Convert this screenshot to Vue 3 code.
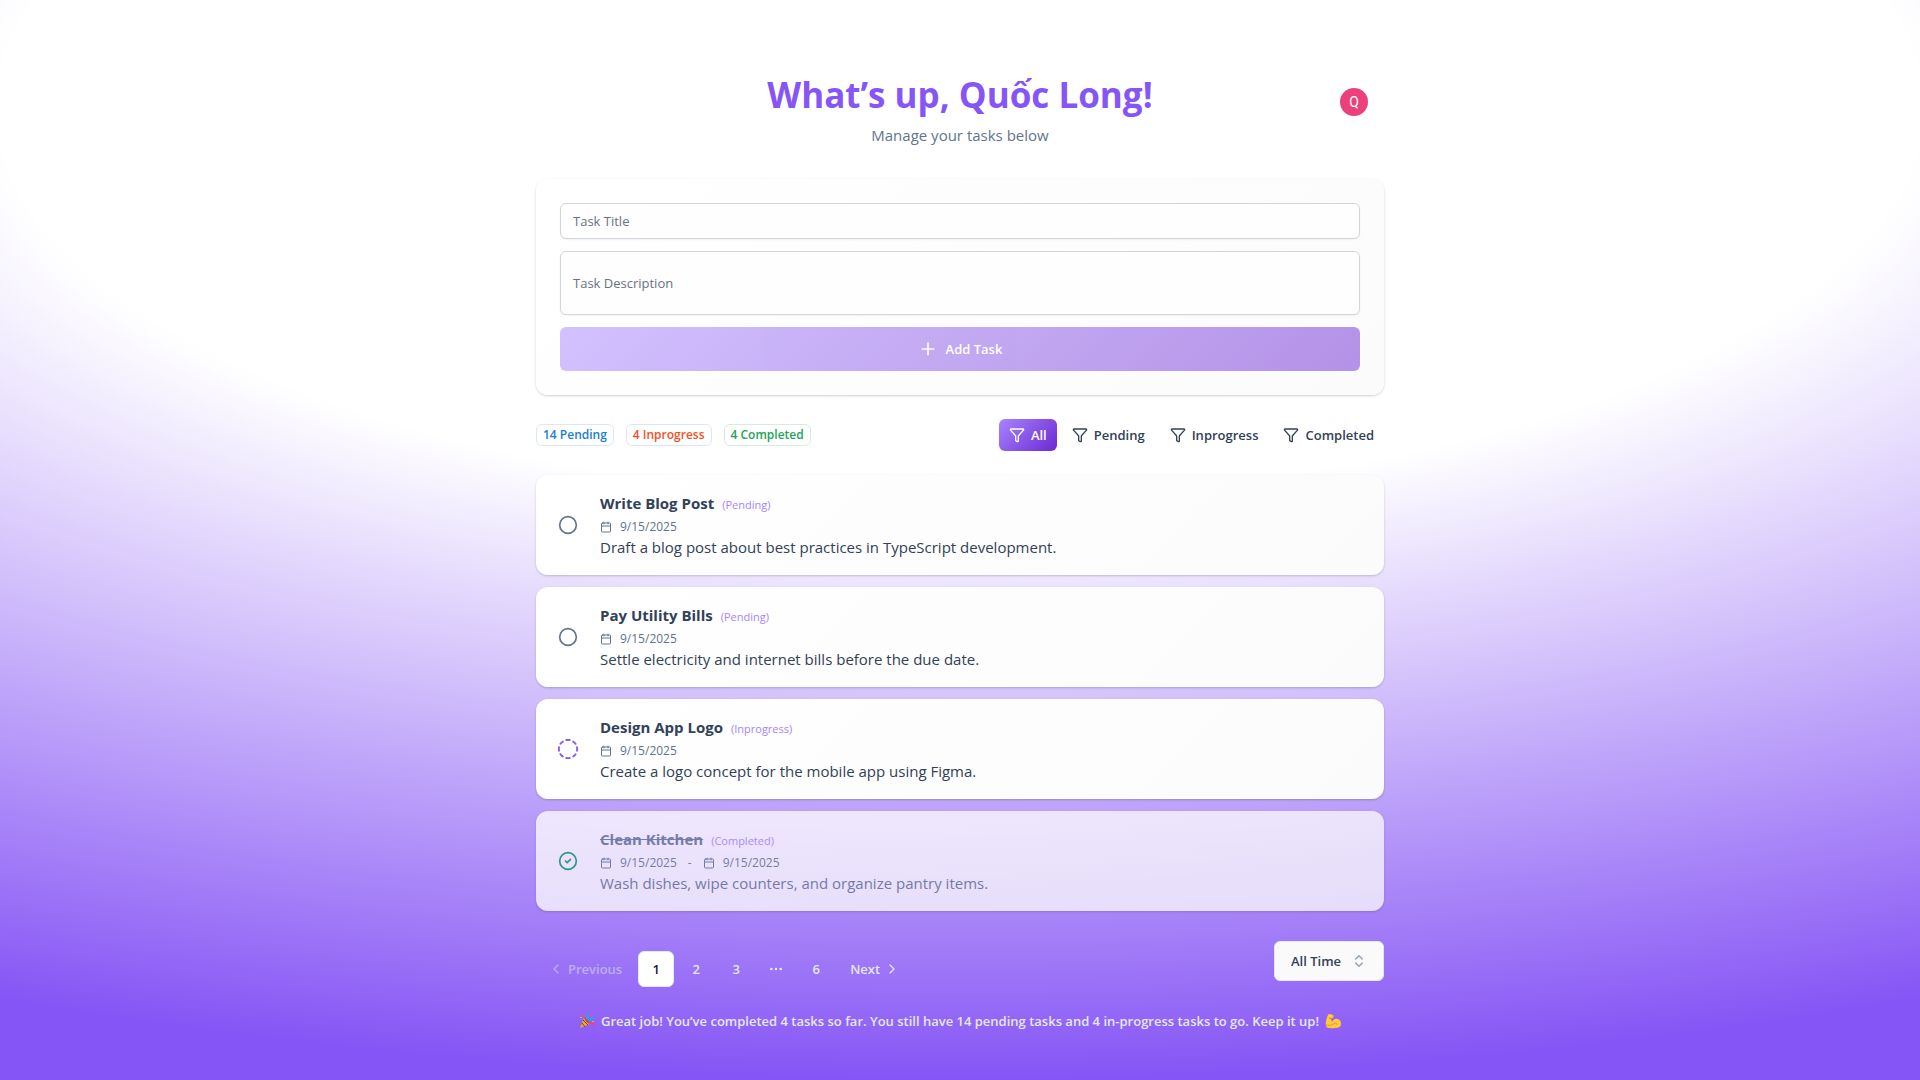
<script setup>
import { ref } from 'vue'

const title = ref('')
const description = ref('')
const activeFilter = ref('All')
const range = ref('All Time')
const filters = ['All', 'Pending', 'Inprogress', 'Completed']
const stats = [
  { text: '14 Pending', tone: 'blue' },
  { text: '4 Inprogress', tone: 'orange' },
  { text: '4 Completed', tone: 'green' },
]
const tasks = [
  { title: 'Write Blog Post', status: 'Pending', dates: ['9/15/2025'], text: 'Draft a blog post about best practices in TypeScript development.' },
  { title: 'Pay Utility Bills', status: 'Pending', dates: ['9/15/2025'], text: 'Settle electricity and internet bills before the due date.' },
  { title: 'Design App Logo', status: 'Inprogress', dates: ['9/15/2025'], text: 'Create a logo concept for the mobile app using Figma.' },
  { title: 'Clean Kitchen', status: 'Completed', dates: ['9/15/2025', '9/15/2025'], text: 'Wash dishes, wipe counters, and organize pantry items.' },
]
</script>

<template>
  <div class="page">
    <main class="column">
      <header class="header">
        <h1>What’s up, Quốc Long!</h1>
        <p>Manage your tasks below</p>
        <button class="avatar" type="button" aria-label="Account">Q</button>
      </header>

      <form class="card composer" @submit.prevent>
        <input v-model="title" class="field" type="text" placeholder="Task Title" aria-label="Task Title" />
        <input v-model="description" class="field tall" type="text" placeholder="Task Description" aria-label="Task Description" />
        <button class="add" type="submit">
          <svg class="icon plus" viewBox="0 0 24 24"><path d="M5 12h14M12 5v14" /></svg>
          Add Task
        </button>
      </form>

      <section class="toolbar">
        <div class="stats">
          <span v-for="s in stats" :key="s.text" class="stat" :class="s.tone">{{ s.text }}</span>
        </div>
        <div class="filters">
          <button
            v-for="f in filters"
            :key="f"
            type="button"
            class="filter"
            :class="{ active: f === activeFilter }"
            @click="activeFilter = f"
          >
            <svg class="icon funnel" viewBox="0 0 24 24"><path d="M10 20a1 1 0 0 0 .553.895l2 1A1 1 0 0 0 14 21v-7a2 2 0 0 1 .517-1.341L21.74 4.67A1 1 0 0 0 21 3H3a1 1 0 0 0-.742 1.67l7.225 7.989A2 2 0 0 1 10 14z" /></svg>
            {{ f }}
          </button>
        </div>
      </section>

      <section class="tasks">
        <article v-for="t in tasks" :key="t.title" class="card task" :class="t.status.toLowerCase()">
          <button class="state" type="button" :aria-label="t.status">
            <svg v-if="t.status === 'Pending'" class="icon" viewBox="0 0 24 24"><circle cx="12" cy="12" r="10" /></svg>
            <svg v-else-if="t.status === 'Inprogress'" class="icon" viewBox="0 0 24 24">
              <path d="M10.1 2.182a10 10 0 0 1 3.8 0M13.9 21.818a10 10 0 0 1-3.8 0M17.609 3.721a10 10 0 0 1 2.69 2.7M2.182 13.9a10 10 0 0 1 0-3.8M20.279 17.609a10 10 0 0 1-2.7 2.69M21.818 10.1a10 10 0 0 1 0 3.8M3.721 6.391a10 10 0 0 1 2.7-2.69M6.391 20.279a10 10 0 0 1-2.69-2.7" />
            </svg>
            <svg v-else class="icon" viewBox="0 0 24 24"><circle cx="12" cy="12" r="10" /><path d="m9 12 2 2 4-4" /></svg>
          </button>
          <div class="body">
            <div class="heading">
              <h2>{{ t.title }}</h2>
              <span>({{ t.status }})</span>
            </div>
            <div class="dates">
              <template v-for="(d, i) in t.dates" :key="i">
                <span v-if="i > 0" class="dash">-</span>
                <svg class="icon calendar" viewBox="0 0 24 24"><path d="M8 2v4M16 2v4M3 10h18" /><rect x="3" y="4" width="18" height="18" rx="2" /></svg>
                <time>{{ d }}</time>
              </template>
            </div>
            <p>{{ t.text }}</p>
          </div>
        </article>
      </section>

      <section class="bottom">
        <nav class="pager" aria-label="Pagination">
          <a class="step disabled" href="#"><svg class="icon" viewBox="0 0 24 24"><path d="m15 18-6-6 6-6" /></svg>Previous</a>
          <a class="num current" href="#" aria-current="page">1</a>
          <a class="num" href="#">2</a>
          <a class="num" href="#">3</a>
          <span class="num"><svg class="icon dots" viewBox="0 0 24 24"><circle cx="5" cy="12" r="1" /><circle cx="12" cy="12" r="1" /><circle cx="19" cy="12" r="1" /></svg></span>
          <a class="num" href="#">6</a>
          <a class="step" href="#">Next<svg class="icon" viewBox="0 0 24 24"><path d="m9 18 6-6-6-6" /></svg></a>
        </nav>
        <label class="range">
          <select v-model="range" aria-label="Time range">
            <option>All Time</option>
            <option>Today</option>
          </select>
          <svg class="icon" viewBox="0 0 24 24"><path d="m7 15 5 5 5-5M7 9l5-5 5 5" /></svg>
        </label>
      </section>

      <footer class="summary">
        <svg class="emoji" viewBox="0 0 16 16" aria-hidden="true">
          <path d="M1 15 5 5l6 6z" fill="#f5a623" />
          <path d="m3 10 3 4M4 7l5 5" stroke="#6b4a35" stroke-width="1" />
          <path d="M5 5q4 1 6 6-4-1-6-6" fill="#b5532b" />
          <path d="M8 6q2-2 0-5M10 8q1-4 5-3" stroke="#1fa7f0" stroke-width="2" fill="none" />
          <path d="M10 10q3-1 5 2" stroke="#e5458f" stroke-width="2" fill="none" />
          <path d="M4 1h2v2H4zM11 1h2v2h-2z" fill="#ee4b92" />
          <path d="M1 4h2v1H1zM13 8h2v1h-2z" fill="#f5a623" />
        </svg>
        <p>Great job! You’ve completed 4 tasks so far. You still have 14 pending tasks and 4 in-progress tasks to go. Keep it up!</p>
        <svg class="emoji" viewBox="0 0 16 16" aria-hidden="true">
          <path d="M3 2q0-1 2-1l3 1q1 1 0 3l-2 1 1 3q2-4 6-3 3 1 3 5 0 4-6 4-8 1-9-2Q0 8 3 2" fill="#ffc83d" />
          <path d="M1 12q5 2 9-2 2 0 2 2" stroke="#f19a22" stroke-width="1" fill="none" />
          <path d="M4 5q2 1 4 0" stroke="#e08a1a" stroke-width="1" fill="none" />
        </svg>
      </footer>
    </main>
  </div>
</template>

<style>
body {
  margin: 0;
}
</style>

<style scoped>
.page {
  box-sizing: border-box;
  min-height: 100vh;
  padding: 32px 16px;
  background: radial-gradient(125% 90% at 50% 10%, #fff 40%, #8655f5 100%);
  color: #314158;
  font-family: "Segoe UI", "Open Sans", "Noto Sans", sans-serif;
  font-size: 15px;
  line-height: 24px;
}

.page *,
.page *::before {
  box-sizing: border-box;
}

h1,
h2,
p {
  margin: 0;
}

button,
input,
select {
  font: inherit;
  color: inherit;
}

button {
  border: 0;
  padding: 0;
  background: none;
  cursor: pointer;
}

a {
  color: inherit;
  text-decoration: none;
}

.icon {
  flex: none;
  width: 16px;
  height: 16px;
  fill: none;
  stroke: currentColor;
  stroke-width: 2;
  stroke-linecap: round;
  stroke-linejoin: round;
}

.column {
  display: flex;
  flex-direction: column;
  gap: 24px;
  max-width: 848px;
  margin: 0 auto;
}

.header {
  position: relative;
  padding: 43px 0 8px;
  text-align: center;
}

.header h1 {
  color: #8655f5;
  font-size: 35px;
  line-height: 40px;
  font-weight: 700;
}

.header p {
  margin-top: 8px;
  color: #62748e;
}

.avatar {
  position: absolute;
  top: 56px;
  right: 16px;
  width: 28px;
  height: 28px;
  border-radius: 50%;
  background: #ec407a;
  color: #fff;
  font-family: Roboto, sans-serif;
  font-size: 14px;
}

.card {
  border-radius: 12px;
  background: linear-gradient(135deg, #fff, #fbfbfb);
  box-shadow: 0 1px 3px rgb(0 0 0 / 10%), 0 1px 2px rgb(0 0 0 / 10%);
}

.composer {
  display: flex;
  flex-direction: column;
  gap: 12px;
  padding: 24px;
}

.field {
  width: 100%;
  height: 36px;
  padding: 0 12px;
  border: 1px solid #d1d5dc;
  border-radius: 6px;
  background: #fefefe;
  box-shadow: 0 1px 2px rgb(0 0 0 / 5%);
  font-size: 13px;
}

.field.tall {
  height: 64px;
}

.field::placeholder {
  color: #6a7282;
  opacity: 1;
}

.add {
  display: flex;
  align-items: center;
  justify-content: center;
  gap: 8px;
  height: 44px;
  border-radius: 6px;
  background: linear-gradient(135deg, #a684ff, #6d28d2);
  color: #fff;
  font-size: 13px;
  font-weight: 600;
  opacity: 0.5;
}

.plus {
  width: 20px;
  height: 20px;
}

.toolbar,
.bottom {
  display: flex;
  justify-content: space-between;
}

.toolbar {
  align-items: center;
}

.stats {
  display: flex;
  gap: 12px;
}

.stat {
  padding: 1px 6px;
  border: 1px solid #dbe6fe;
  border-radius: 6px;
  background: #fff;
  font-size: 12px;
  line-height: 18px;
  font-weight: 600;
}

.blue {
  color: #1780d0;
}

.orange {
  color: #f4511e;
}

.green {
  border-color: #d3eedd;
  color: #22a35a;
}

.filters {
  display: flex;
  gap: 5px;
}

.filter {
  display: flex;
  align-items: center;
  gap: 6px;
  height: 32px;
  padding: 0 10px;
  border-radius: 6px;
  font-size: 13px;
  font-weight: 600;
}

.filter.active {
  background: linear-gradient(135deg, #a684ff, #6d28d2);
  color: #fff;
}

.tasks {
  display: flex;
  flex-direction: column;
  gap: 12px;
}

.task {
  display: flex;
  align-items: center;
  gap: 20px;
  min-height: 100px;
  padding: 16px 20px;
}

.task.completed {
  opacity: 0.75;
}

.state {
  display: flex;
  align-items: center;
  justify-content: center;
  width: 24px;
  height: 24px;
  color: #62748e;
}

.state .icon {
  width: 20px;
  height: 20px;
}

.inprogress .state {
  color: #8655f5;
}

.inprogress .state .icon {
  width: 22px;
  height: 22px;
}

.completed .state {
  color: #009966;
}

.heading {
  display: flex;
  align-items: baseline;
  gap: 8px;
}

.heading h2 {
  font-size: 15px;
  line-height: 24px;
  font-weight: 700;
}

.heading span {
  color: #a684ff;
  font-size: 11px;
  line-height: 16px;
}

.completed h2 {
  color: #62748e;
  text-decoration: line-through;
}

.completed .body p {
  color: #62748e;
}

.dates {
  display: flex;
  align-items: center;
  gap: 8px;
  margin-top: 4px;
  color: #62748e;
  font-size: 12px;
  line-height: 16px;
}

.calendar {
  width: 12px;
  height: 12px;
}

.dash {
  padding: 0 3px;
}

.bottom {
  padding-top: 6px;
}

.pager {
  display: flex;
  align-items: center;
  gap: 4px;
  padding-top: 10px;
  margin-bottom: -6px;
  color: #e2e8f0;
  font-size: 13px;
  font-weight: 600;
}

.step {
  display: flex;
  align-items: center;
  gap: 4px;
  padding: 0 12px;
}

.disabled {
  opacity: 0.5;
}

.num {
  display: flex;
  align-items: center;
  justify-content: center;
  width: 36px;
  height: 36px;
  border-radius: 6px;
}

.current {
  border: 1px solid #e2e8f0;
  background: #fff;
  color: #1d1535;
}

.range {
  position: relative;
  display: flex;
  height: 40px;
}

.range select {
  width: 110px;
  padding: 0 16px;
  border: 1px solid #e2e8f0;
  border-radius: 6px;
  background: #fafafa;
  appearance: none;
  font-size: 13px;
  font-weight: 600;
}

.range .icon {
  position: absolute;
  top: 12px;
  right: 17px;
  color: #90a1b9;
  pointer-events: none;
}

.summary {
  display: flex;
  align-items: center;
  justify-content: center;
  gap: 6px;
  padding-top: 6px;
  color: #e2e8f0;
  font-size: 13px;
  line-height: 20px;
  font-weight: 600;
}

.emoji {
  width: 16px;
  height: 16px;
  fill: none;
}
</style>
